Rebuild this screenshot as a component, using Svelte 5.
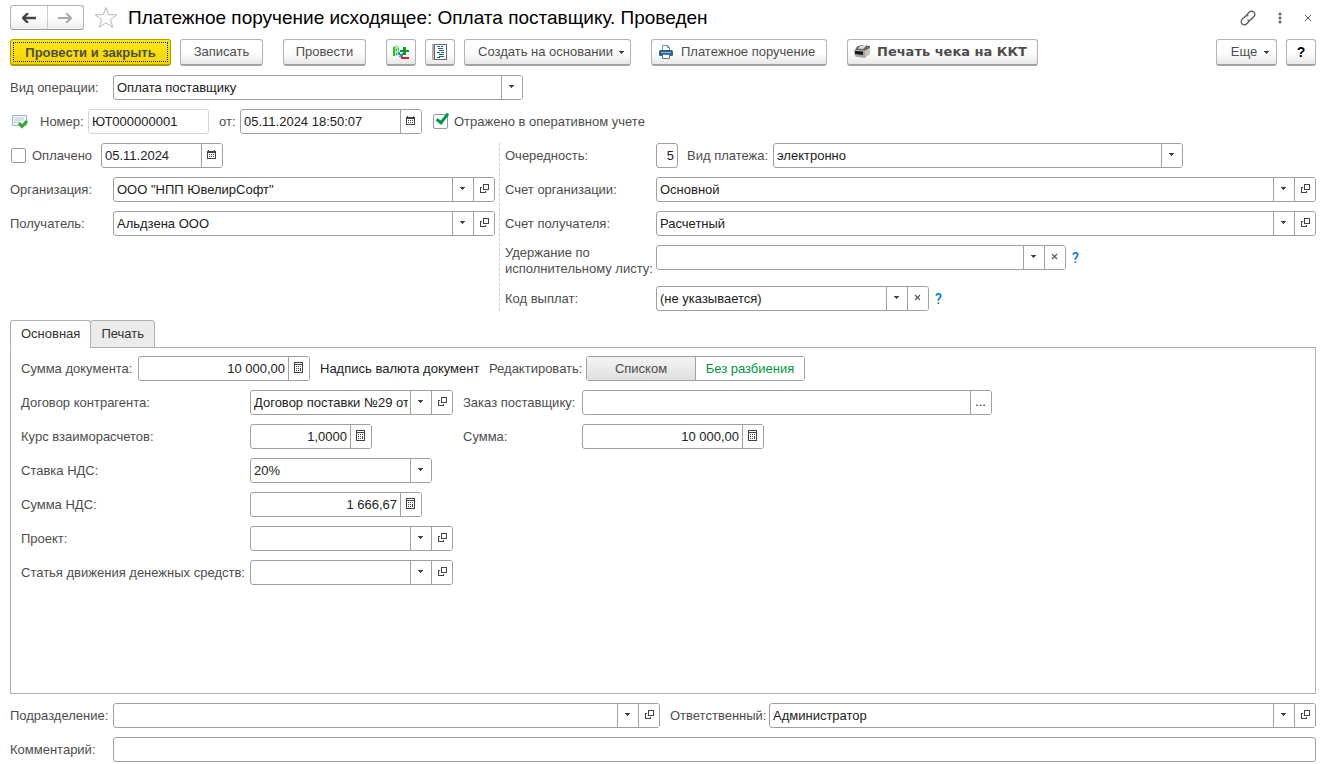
<script lang="ts">
	type Cell = 'drop' | 'open' | 'clear' | 'calendar' | 'calc' | 'dots';

	const CELL_TITLES: Record<Cell, string> = {
		drop: 'Выбрать из списка',
		open: 'Открыть',
		clear: 'Очистить',
		calendar: 'Календарь',
		calc: 'Калькулятор',
		dots: 'Выбрать',
	};

	let reflected = $state(true);
	let paid = $state(false);
	let tab = $state<'main' | 'print'>('main');
	let splitMode = $state<'list' | 'whole'>('whole');
</script>

{#snippet icon(name: Cell)}
	{#if name === 'drop'}
		<svg width="5" height="3" viewBox="0 0 5 3" shape-rendering="crispEdges"><path d="M0 0h5v1H4v1H3v1H2V2H1V1H0z" /></svg>
	{:else if name === 'open'}
		<svg width="11" height="11" viewBox="0 0 11 11" shape-rendering="crispEdges">
			<path fill-rule="evenodd" d="M5 1h6v6H5zM6 2v4h4V2z" />
			<path d="M2 4h2v1H3v4h4V8h1v2H2z" />
		</svg>
	{:else if name === 'clear'}
		<svg width="7" height="7" viewBox="0 0 7 7"><path d="M1 1l5 5M6 1L1 6" stroke="#555" stroke-width="1.1" /></svg>
	{:else if name === 'calendar'}
		<svg width="9" height="9" viewBox="0 0 9 9" shape-rendering="crispEdges">
			<path fill-rule="evenodd" d="M1 0h1v1h5V0h1v1h1v8H0V1h1zM1 3v5h7V3z" />
			<path d="M2 4h1v1H2zM4 4h1v1H4zM6 4h1v1H6zM2 6h1v1H2zM4 6h1v1H4zM6 6h1v1H6z" />
		</svg>
	{:else if name === 'calc'}
		<svg width="9" height="11" viewBox="0 0 9 11" shape-rendering="crispEdges">
			<path fill-rule="evenodd" d="M0 0h9v11H0zM1 1v1h7V1zM1 3v7h7V3z" />
			<path d="M2 4h1v1H2zM4 4h1v1H4zM6 4h1v1H6zM2 6h1v1H2zM4 6h1v1H4zM6 6h1v3H6zM2 8h1v1H2zM4 8h1v1H4z" />
		</svg>
	{:else}
		<span>...</span>
	{/if}
{/snippet}

{#snippet cell(name: Cell)}
	<button type="button" class="cell" aria-label={CELL_TITLES[name]}>{@render icon(name)}</button>
{/snippet}

{#snippet combo(id: string, value: string, size: string, extra?: Cell)}
	<div class="field {size}">
		<select {id}>
			<option>{value}</option>
		</select>
		<span class="cell arrow">{@render icon('drop')}</span>
		{#if extra}{@render cell(extra)}{/if}
	</div>
{/snippet}

{#snippet entry(id: string, value: string, size: string, extra?: Cell, numeric = false)}
	<div class="field {size}">
		<input {id} type="text" class:numeric {value} />
		{#if extra}{@render cell(extra)}{/if}
	</div>
{/snippet}

<main class="form">
	<header class="title-bar">
		<div class="history">
			<button type="button" aria-label="Назад">
				<svg width="14" height="10" viewBox="0 0 14 10"><path d="M6 0L1 5l5 5M1 5h13" fill="none" stroke="#444" stroke-width="2.4" /></svg>
			</button>
			<button type="button" aria-label="Вперед">
				<svg width="14" height="10" viewBox="0 0 14 10"><path d="M8 0l5 5-5 5M13 5H0" fill="none" stroke="#aaa" stroke-width="2" /></svg>
			</button>
		</div>
		<button type="button" class="plain star" aria-label="Добавить в избранное">
			<svg width="24" height="23" viewBox="0 0 24 23"><path d="M12 1.5l2.7 7.1 8.1.2-6.3 4.8 2.2 7.7-6.7-4.5-6.7 4.5 2.2-7.7-6.3-4.8 8.1-.2z" fill="none" stroke="#b4b8be" /></svg>
		</button>
		<h1>Платежное поручение исходящее: Оплата поставщику. Проведен</h1>
		<div class="window-tools">
			<button type="button" class="plain" aria-label="Получить ссылку">
				<svg width="16" height="16" viewBox="0 0 16 16" fill="none" stroke="#555" stroke-width="1.2">
					<path d="M6.5 5l3-3a2.900 2.900 0 0 1 4.200 0l.3.300a2.900 2.900 0 0 1 0 4.200l-3 3a2.900 2.900 0 0 1-3.500.4" />
					<path d="M9.500 11l-3 3a2.900 2.900 0 0 1-4.200 0L2 13.700a2.900 2.900 0 0 1 0-4.200l3-3a2.900 2.900 0 0 1 3.500-.4" />
				</svg>
			</button>
			<button type="button" class="plain" aria-label="Меню">
				<svg width="4" height="12" viewBox="0 0 4 12" fill="#666"><circle cx="2" cy="2" r="1.5" /><circle cx="2" cy="6" r="1.5" /><circle cx="2" cy="10" r="1.5" /></svg>
			</button>
			<button type="button" class="plain" aria-label="Закрыть">
				<svg width="8" height="8" viewBox="0 0 8 8"><path d="M1 1l6 6M7 1L1 7" stroke="#555" /></svg>
			</button>
		</div>
	</header>

	<div class="toolbar">
		<div class="group">
			<button type="button" class="btn primary"><span>Провести и закрыть</span></button>
			<button type="button" class="btn short">Записать</button>
		</div>
		<button type="button" class="btn short">Провести</button>
		<div class="group">
			<button type="button" class="btn square" aria-label="Движения документа">
				<svg width="16" height="16" viewBox="0 0 16 16">
					<path d="M0 3l3-2 3 1v9l-4 1-2-1z" fill="#a6eba6" />
					<path d="M0 3h2v9H0zM3 5h1v2H3zM3 9h1v2H3zM5 4h1v2H5zM5 8h1v2H5z" fill="#2fb93a" />
					<path d="M7 6h3V3h3v3h3v2h-3v3h-3V8H7z" fill="#0a9a1c" />
					<path d="M5 8h2v2l3-1v4H6l1-2H5z" fill="#2b8bd8" />
					<path d="M8 13h8v2H8z" fill="#f01414" />
				</svg>
			</button>
			<button type="button" class="btn square" aria-label="Журнал">
				<svg width="16" height="16" viewBox="0 0 16 16" shape-rendering="crispEdges">
					<path d="M0 0h2v16H0z" fill="#b0b0b0" />
					<path d="M2 0h13v16H2z" fill="#666" />
					<path d="M3 1h11v14H3z" fill="#fff" />
					<path d="M5 2h3v1H5zM6 4h5v1H6zM7 6h5v1H7zM5 8h3v1H5zM9 8h3v1H9zM7 10h5v1H7zM7 12h5v1H7zM5 13h3v1H5zM9 2h2v1H9z" fill="#1c5f8a" />
				</svg>
			</button>
			<button type="button" class="btn create">Создать на основании {@render icon('drop')}</button>
		</div>
		<button type="button" class="btn order">
			<svg width="14" height="14" viewBox="0 0 14 14">
				<path d="M3.500 5V.5h5l2 2V5" fill="#fff" stroke="#7790aa" />
				<path d="M8.500.5v2h2" fill="none" stroke="#7790aa" />
				<rect x="0" y="5" width="14" height="6" rx="1.5" fill="#2f6089" />
				<path d="M2 7.500h10" stroke="#9db8cf" />
				<path d="M3.500 9.500h7v4h-7z" fill="#fff" stroke="#54789b" />
			</svg>
			Платежное поручение
		</button>
		<button type="button" class="btn receipt">
			<svg width="16" height="14" viewBox="0 0 16 14">
				<path d="M3 1.500L7 0l9 1v2l-4 3-11-1z" fill="#666" />
				<path d="M6 1l5-1 1 1-3 3-5-.5z" fill="#ddd" />
				<path d="M0 5l11 .5V13L1 11.500z" fill="#a4a49c" />
				<path d="M11 5.500L16 3v6l-5 4z" fill="#c4c4ba" />
				<path d="M1 6l8 .5V10L1 9z" fill="#161616" />
			</svg>
			Печать чека на ККТ
		</button>
		<div class="group last">
			<button type="button" class="btn more">Еще {@render icon('drop')}</button>
			<button type="button" class="btn square help">?</button>
		</div>
	</div>

	<div class="row">
		<label class="caption" for="operation">Вид операции:</label>
		{@render combo('operation', 'Оплата поставщику', 'wide')}
	</div>

	<div class="row number-row">
		<svg class="posted" width="18" height="16" viewBox="0 0 18 16">
			<path d="M1.500 1.500h14v10h-14z" fill="#eef4f9" stroke="#9fb4c7" />
			<path d="M3 4h10M3 6h10M3 8h5" stroke="#bccbd8" />
			<path d="M8 9l3 3.500L16 7" fill="none" stroke="#35a535" stroke-width="3" />
		</svg>
		<label for="number">Номер:</label>
		<div class="field number locked">
			<input id="number" type="text" value="ЮТ000000001" readonly />
		</div>
		<label class="from" for="moment">от:</label>
		{@render entry('moment', '05.11.2024 18:50:07', 'medium', 'calendar')}
		<label class="check reflected"><input type="checkbox" bind:checked={reflected} />Отражено в оперативном учете</label>
	</div>

	<div class="columns">
		<div class="column">
			<div class="row">
				<label class="check paid"><input type="checkbox" bind:checked={paid} />Оплачено</label>
				<div class="field small">
					<input type="text" aria-label="Дата оплаты" value="05.11.2024" />
					{@render cell('calendar')}
				</div>
			</div>
			<div class="row">
				<label class="caption" for="company">Организация:</label>
				{@render combo('company', 'ООО "НПП ЮвелирСофт"', 'fill', 'open')}
			</div>
			<div class="row">
				<label class="caption" for="payee">Получатель:</label>
				{@render combo('payee', 'Альдзена ООО', 'fill', 'open')}
			</div>
		</div>
		<div class="column details">
			<div class="row">
				<label class="caption" for="priority">Очередность:</label>
				{@render entry('priority', '5', 'tiny', undefined, true)}
				<label class="pay-kind" for="pay-kind">Вид платежа:</label>
				{@render combo('pay-kind', 'электронно', 'wide')}
			</div>
			<div class="row">
				<label class="caption" for="company-account">Счет организации:</label>
				{@render combo('company-account', 'Основной', 'fill', 'open')}
			</div>
			<div class="row">
				<label class="caption" for="payee-account">Счет получателя:</label>
				{@render combo('payee-account', 'Расчетный', 'fill', 'open')}
			</div>
			<div class="row tall">
				<label class="caption" for="deduction">Удержание по исполнительному листу:</label>
				{@render combo('deduction', '', 'wide', 'clear')}
				<button type="button" class="plain hint">?</button>
			</div>
			<div class="row">
				<label class="caption" for="pay-code">Код выплат:</label>
				{@render combo('pay-code', '(не указывается)', 'code', 'clear')}
				<button type="button" class="plain hint">?</button>
			</div>
		</div>
	</div>

	<section class="pages">
		<div class="tabs" role="tablist">
			<button type="button" role="tab" aria-selected={tab === 'main'} class:active={tab === 'main'} onclick={() => (tab = 'main')}>Основная</button>
			<button type="button" role="tab" aria-selected={tab === 'print'} class:active={tab === 'print'} onclick={() => (tab = 'print')}>Печать</button>
		</div>
		<div class="panel" role="tabpanel">
			{#if tab === 'main'}
				<div class="row">
					<label class="amount-caption" for="amount">Сумма документа:</label>
					{@render entry('amount', '10 000,00', 'sum', 'calc', true)}
					<span class="currency">Надпись валюта документ</span>
					<span class="edit-caption" id="edit-mode">Редактировать:</span>
					<div class="switch" role="group" aria-labelledby="edit-mode">
						<button type="button" class:chosen={splitMode === 'list'} onclick={() => (splitMode = 'list')}>Списком</button>
						<button type="button" class:chosen={splitMode === 'whole'} onclick={() => (splitMode = 'whole')}>Без разбиения</button>
					</div>
				</div>
				<div class="pairs">
					<label for="contract">Договор контрагента:</label>
					{@render combo('contract', 'Договор поставки №29 от 05.11.2024', 'link', 'open')}
					<label class="second" for="supplier-order">Заказ поставщику:</label>
					{@render entry('supplier-order', '', 'wide', 'dots')}

					<label for="rate">Курс взаиморасчетов:</label>
					{@render entry('rate', '1,0000', 'small', 'calc', true)}
					<label class="second" for="total">Сумма:</label>
					{@render entry('total', '10 000,00', 'medium', 'calc', true)}

					<label class="first" for="vat-rate">Ставка НДС:</label>
					{@render combo('vat-rate', '20%', 'medium')}

					<label class="first" for="vat">Сумма НДС:</label>
					{@render entry('vat', '1 666,67', 'sum', 'calc', true)}

					<label class="first" for="project">Проект:</label>
					{@render combo('project', '', 'link', 'open')}

					<label class="first" for="cash-flow">Статья движения денежных средств:</label>
					{@render combo('cash-flow', '', 'link', 'open')}
				</div>
			{/if}
		</div>
	</section>

	<div class="row">
		<label class="caption" for="department">Подразделение:</label>
		{@render combo('department', '', 'fill', 'open')}
		<label class="responsible" for="responsible">Ответственный:</label>
		{@render combo('responsible', 'Администратор', 'fill', 'open')}
	</div>
	<div class="row">
		<label class="caption" for="comment">Комментарий:</label>
		{@render entry('comment', '', 'fill')}
	</div>
</main>

<style>
	:global(body) {
		background: #fff;
	}

	.form {
		display: flex;
		flex-direction: column;
		gap: 9px;
		box-sizing: border-box;
		min-height: 100vh;
		padding: 5px 4px 2px 10px;
		color: #4d4d4d;
		fill: #444;
		font-family: 'Liberation Sans', Arial, sans-serif;
		font-size: 13px;
		line-height: 16px;
	}

	.form :global(*) {
		box-sizing: border-box;
	}

	button,
	input,
	select {
		margin: 0;
		color: inherit;
		font: inherit;
	}

	svg {
		display: block;
		flex: none;
	}

	label {
		flex: none;
		white-space: nowrap;
	}

	.plain {
		display: flex;
		padding: 0;
		border: 0;
		background: none;
	}

	.title-bar {
		display: flex;
		align-items: center;
		height: 25px;
	}

	.history {
		display: flex;
		flex: none;
		width: 74px;
		height: 25px;
		border: 1px solid #b3b3b3;
		border-bottom-color: #999;
		border-radius: 3px;
		background: linear-gradient(#fff 50%, #ececec);
	}

	.history button {
		display: flex;
		flex: 1;
		align-items: center;
		justify-content: center;
		padding: 0;
		border: 0;
		background: none;
	}

	.history button + button {
		border-left: 1px solid #ccc;
	}

	.star {
		margin: 0 10px;
	}

	h1 {
		margin: 0;
		color: #000;
		font-size: 19px;
		font-weight: normal;
		line-height: 24px;
		white-space: nowrap;
	}

	.window-tools {
		display: flex;
		align-items: center;
		gap: 22px;
		margin-left: auto;
		padding-right: 4px;
	}

	.toolbar {
		display: flex;
		gap: 20px;
	}

	.group {
		display: flex;
		gap: 9px;
	}

	.last {
		margin-left: auto;
	}

	.btn {
		display: flex;
		align-items: center;
		justify-content: center;
		height: 27px;
		padding: 0;
		border: 1px solid #b3b3b3;
		border-bottom: 2px solid #a3a3a3;
		border-radius: 3px;
		background: linear-gradient(#fff 50%, #e8e8e8);
		white-space: nowrap;
	}

	.primary {
		width: 161px;
		padding: 2px;
		border-color: #b39b00;
		background: linear-gradient(#ffe81a, #f5d400);
		font-weight: bold;
	}

	.primary span {
		flex: 1;
		height: 20px;
		border: 1px dotted #1c1c8c;
		line-height: 19px;
	}

	.short {
		width: 83px;
	}

	.square {
		width: 30px;
	}

	.create {
		gap: 6px;
		width: 167px;
		padding-left: 7px;
	}

	.order {
		justify-content: flex-start;
		gap: 8px;
		width: 176px;
		padding-left: 7px;
	}

	.receipt {
		justify-content: flex-start;
		gap: 7px;
		width: 191px;
		padding-left: 6px;
		font-family: 'DejaVu Sans', Verdana, sans-serif;
		font-weight: bold;
	}

	.more {
		gap: 7px;
		width: 61px;
		padding-left: 7px;
	}

	.help {
		color: #000;
		font-size: 14px;
		font-weight: bold;
	}

	.row {
		display: flex;
		align-items: center;
		min-height: 25px;
	}

	.caption {
		width: 103px;
	}

	.field {
		display: flex;
		flex: none;
		height: 25px;
		border: 1px solid #a0a0a0;
		border-radius: 3px;
		background: #fff;
		color: #222;
		overflow: hidden;
	}

	.field input,
	.field select {
		flex: 1;
		min-width: 0;
		padding: 0 3px;
		border: 0;
		border-radius: 0;
		outline: 0;
		background: none;
		appearance: none;
	}

	.field select {
		padding-right: 23px;
	}

	.field .numeric {
		text-align: right;
	}

	.cell {
		display: flex;
		flex: none;
		align-items: center;
		justify-content: center;
		width: 21px;
		padding: 0 1px 2px 0;
		border: 0;
		border-left: 1px solid #a0a0a0;
		background: #fff;
	}

	.arrow {
		margin-left: -21px;
		pointer-events: none;
	}

	.fill {
		flex: 1;
		min-width: 0;
	}

	.wide {
		width: 410px;
	}

	.code {
		width: 273px;
	}

	.link {
		width: 203px;
	}

	.medium {
		width: 182px;
	}

	.sum {
		width: 172px;
	}

	.small {
		width: 122px;
	}

	.number {
		width: 121px;
	}

	.tiny {
		width: 22px;
	}

	.locked {
		border-color: #d4d4d4;
	}

	.posted {
		margin-right: 11px;
	}

	.number-row label[for='number'] {
		width: 48px;
	}

	.number-row {
		padding-left: 1px;
	}

	.from {
		width: 31px;
		padding-left: 10px;
	}

	.check {
		display: flex;
		align-items: center;
		gap: 6px;
	}

	.check input {
		width: 15px;
		height: 15px;
		border: 1px solid #999;
		border-radius: 2px;
		background: #fff;
		appearance: none;
	}

	/* The tick sticks out above the top right corner of its box. */
	.check input:checked::after {
		content: '';
		display: block;
		width: 7px;
		height: 13px;
		margin: -4px 0 0 5px;
		border: solid #009646;
		border-width: 0 3px 3px 0;
		box-sizing: border-box;
		transform: rotate(38deg);
	}

	.reflected {
		margin-left: 11px;
	}

	.paid {
		width: 91px;
		padding-left: 1px;
	}

	.columns {
		display: grid;
		grid-template-columns: minmax(0, 485px) minmax(0, 1fr);
		gap: 4px;
	}

	.column {
		display: flex;
		flex-direction: column;
		gap: 9px;
	}

	.details {
		padding-left: 5px;
		border-left: 1px dashed #ccc;
	}

	.details .caption {
		width: 151px;
	}

	.pay-kind {
		width: 95px;
		padding-left: 9px;
	}

	.tall {
		align-items: flex-start;
		min-height: 32px;
	}

	.tall .caption {
		white-space: normal;
	}

	.hint {
		height: 25px;
		align-items: center;
		margin-left: 6px;
		color: #0077c8;
		font-family: Roboto, 'Liberation Sans', sans-serif;
		font-size: 14px;
		font-weight: 500;
	}

	.pages {
		display: flex;
		flex: 1;
		flex-direction: column;
	}

	.tabs {
		display: flex;
	}

	.tabs button {
		z-index: 1;
		height: 28px;
		margin-bottom: -1px;
		padding: 0 10px;
		border: 1px solid #b0b0b0;
		border-radius: 3px 3px 0 0;
		background: #ebebeb;
		color: #333;
	}

	.tabs button + button {
		margin-left: -1px;
	}

	.tabs .active {
		border-bottom-color: #fff;
		background: #fff;
	}

	.panel {
		display: flex;
		flex: 1;
		flex-direction: column;
		gap: 9px;
		padding: 8px 10px;
		border: 1px solid #b0b0b0;
	}

	.amount-caption {
		width: 117px;
	}

	.currency {
		width: 169px;
		margin-left: 10px;
		color: #222;
		white-space: nowrap;
	}

	.edit-caption {
		width: 97px;
	}

	.switch {
		display: flex;
		width: 219px;
		height: 25px;
		border: 1px solid #a0a0a0;
		border-radius: 3px;
		overflow: hidden;
	}

	.switch button {
		flex: 1;
		padding: 0;
		border: 0;
		background: linear-gradient(#f4f4f4, #e0e0e0);
		white-space: nowrap;
	}

	.switch button + button {
		border-left: 1px solid #a0a0a0;
	}

	.switch .chosen {
		background: #fff;
		color: #009646;
	}

	.pairs {
		display: grid;
		grid-template-columns: 229px 203px 129px 1fr;
		align-items: center;
		row-gap: 9px;
	}

	.pairs .first {
		grid-column: 1;
	}

	.second {
		padding-left: 10px;
	}

	.responsible {
		width: 109px;
		padding-left: 10px;
	}
</style>
